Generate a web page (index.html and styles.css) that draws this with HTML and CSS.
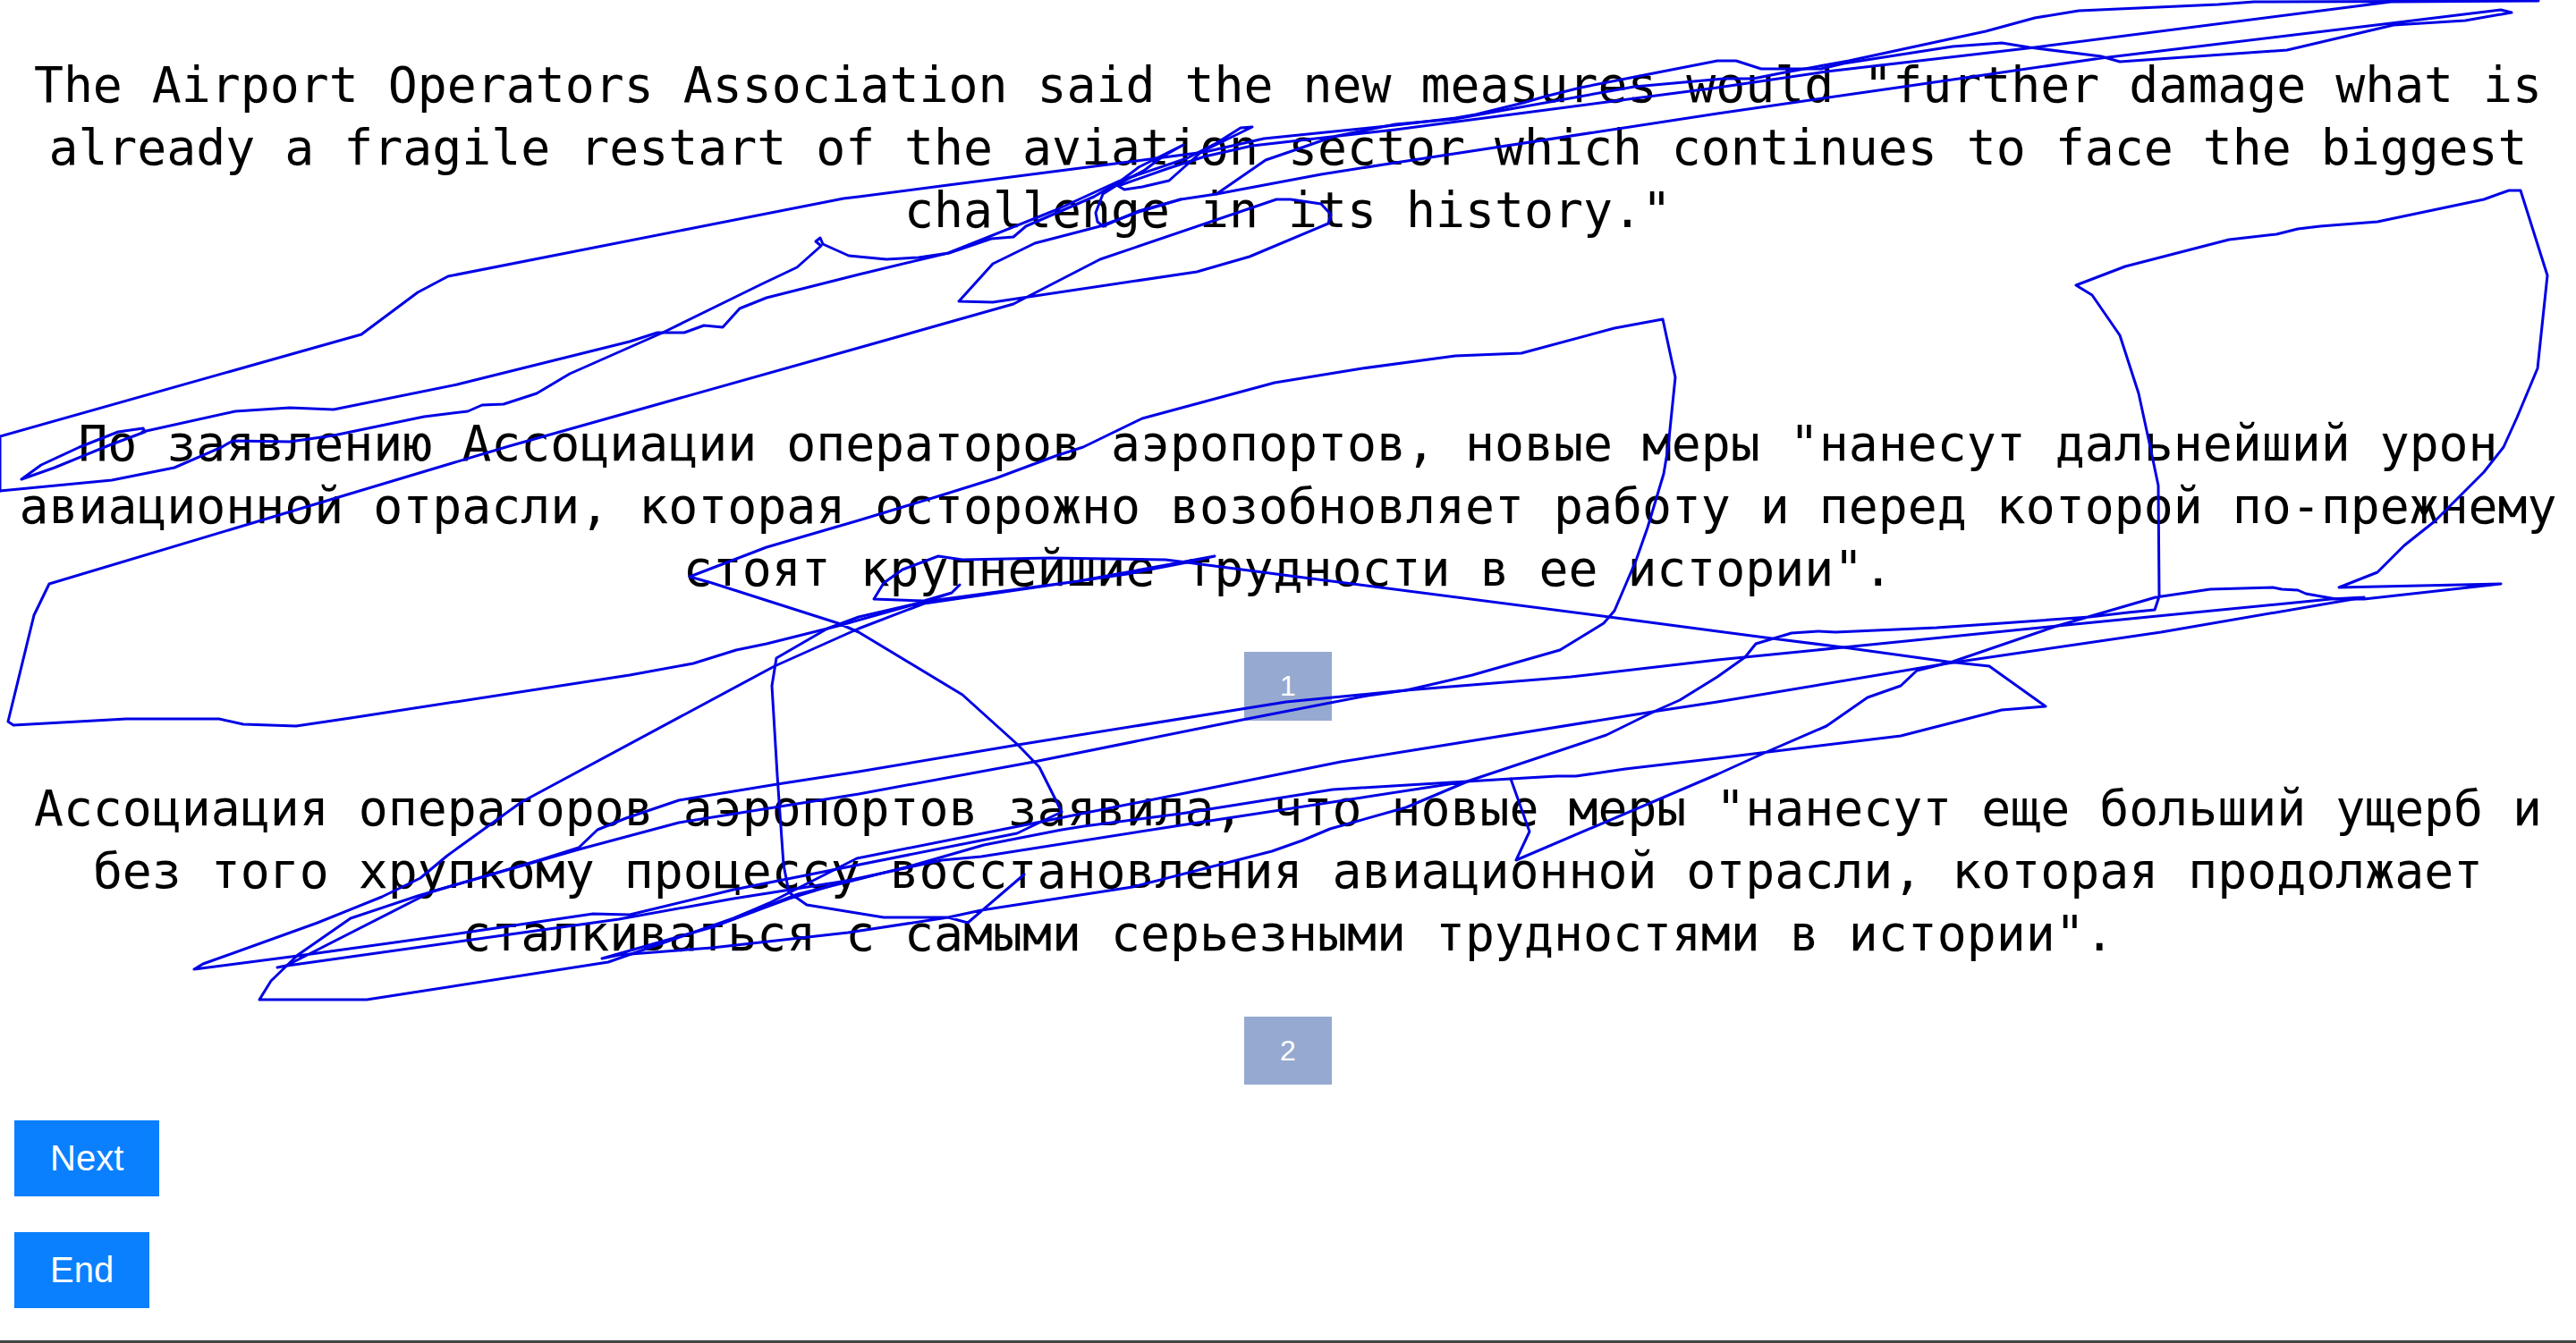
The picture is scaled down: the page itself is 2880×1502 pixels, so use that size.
FILE: index.html
```html
<!DOCTYPE html>
<html lang="en">
<head>
<meta charset="utf-8">
<title>Translation sketch</title>
<link rel="stylesheet" href="styles.css">
</head>
<body>
<main class="page">
  <p class="passage passage-first">The Airport Operators Association said the new measures would "further damage what is already a fragile restart of the aviation sector which continues to face the biggest challenge in its history."</p>
  <p class="passage">По заявлению Ассоциации операторов аэропортов, новые меры "нанесут дальнейший урон авиационной отрасли, которая осторожно возобновляет работу и перед которой по-прежнему стоят крупнейшие трудности в ее истории".</p>
  <div class="tag">1</div>
  <p class="passage">Ассоциация операторов аэропортов заявила, что новые меры "нанесут еще больший ущерб и без того хрупкому процессу восстановления авиационной отрасли, которая продолжает сталкиваться с самыми серьезными трудностями в истории".</p>
  <div class="tag">2</div>
  <div class="actions">
    <button class="btn" type="button">Next</button>
    <button class="btn" type="button">End</button>
  </div>
  <div class="bottom-rule"></div>
</main>
<svg class="scribble" width="2880" height="1502" viewBox="0 0 2880 1502" aria-hidden="true">
  <polyline points="0,549 0,488 404,374 467,327 501,309 943,222 960,220 1060,207 1270,180 1347,170 1413,155 1560,140 1627,132 1650,128 1703,115 1727,108 1767,98 1833,85 1920,68 1941,68 1969,77 2036,77 2061,71 2183,52 2238,48 2269,53 2349,63 2370,69 2557,56 2676,28 2756,23 2808,14 2796,11 2673,26 2349,65 2128,97 1920,127 1560,182 1477,195 1360,217 1320,223 1273,237 1230,253 1157,272 1110,295 1072,337 1110,338 1338,304 1397,287 1485,250 1488,240 1477,228 1443,223 1427,223 1230,290 1133,340 960,389 569,499 55,653 38,688 9,807 15,811 141,804 245,804 272,810 331,812 392,803 704,755 775,742 823,727 857,720 937,700 1033,673 1205,650 1260,642 1327,629 1358,622 1205,650 1033,675 960,703 866,745 583,897 500,957 470,982 427,1003 355,1032 227,1078 217,1084 333,1069 520,1043 663,1022 704,1023 820,995 1137,932 1187,908 1173,880 1162,858 1138,833 1076,777 960,707 937,697 796,652 771,645 857,612 960,582 1049,555 1113,535 1180,510 1211,500 1277,468 1425,428 1523,412 1627,398 1701,395 1805,367 1859,357 1873,422 1865,500 1860,530 1842,590 1829,627 1805,683 1793,697 1744,727 1646,755 1572,772 1529,778 1389,805 1156,852 960,888 759,920 647,950 483,997 320,1080 310,1082 321,1080 520,1052 692,1028 820,1005 947,985"/>
  <polyline points="0,549 125,537 195,523 248,500 260,493 324,494 373,487 474,466 523,460 539,453 563,452 600,440 637,418 741,372 851,318 891,299 918,275 912,270 917,266 920,273 949,286 991,290 1027,288 1061,283 1108,267 1133,265 1147,253 1223,220 1252,203 1273,187 1323,162 1300,175 1280,190 1252,205 1233,217 1225,238 1227,248 1233,253 1273,236 1320,223"/>
  <polyline points="24,536 46,520 89,500 132,483 160,479 162,483 122,498 61,523 24,536"/>
  <polyline points="159,483 263,460 324,456 373,458 511,430 704,382 735,372 765,372 787,364 808,366 827,345 857,333 960,307 1060,283 1180,235 1250,203 1327,177 1360,160 1387,143 1400,142 1343,170 1307,202 1277,209 1257,212 1250,208 1307,188 1347,175 1400,163 1560,145 1920,98 2042,80 2275,53 2673,2 2838,1 2520,2 2480,5 2324,12 2275,20 2220,35 2067,68 1990,82 1960,88 1927,88 1827,97 1627,133 1560,139 1490,153 1450,167 1415,179 1360,217"/>
  <polyline points="1145,978 1082,1032 1060,1026 988,1026 902,1012 882,998 876,967 869,867 863,767 868,736 925,703 960,690 1033,673 1064,663 1073,654 1064,663 1033,672 977,670 988,652 1009,637 1049,622 1076,626 1174,624 1303,626 1327,629 1450,645 1799,690 1920,706 1981,714 2061,724 2177,740 2224,745 2287,790 2238,794 2125,823 1920,848 1817,860 1762,868 1741,868 1689,871 1710,930 1695,962 1920,866 1975,841 2042,812 2088,780 2125,767 2143,750 2183,740 2300,700 2410,668 2471,659 2541,657 2551,659 2569,660 2578,664 2612,670 2643,670 2796,653 2615,657 2658,640 2688,610 2722,583 2777,528 2799,500 2814,467 2837,412 2848,308 2818,213 2805,213 2777,223 2658,248 2594,253 2569,256 2545,262 2492,268 2376,298 2321,319 2339,330 2370,375 2391,440 2404,500 2413,543 2414,667 2409,682 2379,685 2336,690 2238,697 2165,702 2052,707 2033,706 2003,708 1963,720 1951,735 1920,757 1878,783 1851,795 1796,822 1643,873 1572,903 1487,927 1456,940 1422,952 1266,992 1097,1018 1060,1026 948,1043 796,1060 692,1068 673,1072 796,1037 882,1005 947,985 1053,962 1097,958 1320,923 1633,875"/>
  <polyline points="1689,871 1490,883 1320,910 1212,924 1187,928 1100,945 1020,968 953,985 892,1000 796,1037"/>
  <polyline points="2643,668 2416,707 2177,742 1920,785 1854,795 1499,852 1320,888 1144,923 958,960 883,998 860,1010 820,1027 680,1076 410,1118 290,1118 303,1097 333,1068 392,1027 467,1002 603,962 647,948 668,928 700,915 759,895 869,877 960,863 1138,833 1438,785 1572,772 1756,757 1920,738 2061,724 2300,700 2606,670 2643,668"/>
</svg>
</body>
</html>
```

FILE: styles.css
```css
* { box-sizing: border-box; }

html, body { margin: 0; padding: 0; background: #fff; }

.page {
  display: flex;
  flex-direction: column;
  align-items: center;
  min-height: 1502px;
  padding: 60px 8px 0;
}

.passage {
  margin: 0 0 58px;
  width: 100%;
  font-family: "DejaVu Sans Mono", monospace;
  font-size: 54.8px;
  line-height: 70px;
  text-align: center;
  color: #000;
}

.passage-first { margin-bottom: 191px; }

.tag {
  margin-bottom: 63px;
  padding: 20px 40px;
  background: #96a9d0;
  color: #fff;
  font-family: "Liberation Sans", Arial, sans-serif;
  font-size: 32px;
  line-height: 36.5px;
}

.actions {
  align-self: stretch;
  display: flex;
  flex-direction: column;
  align-items: flex-start;
  gap: 40px;
  margin-top: -23px;
  padding-left: 8px;
}

.btn {
  display: block;
  padding: 20px 40px;
  border: 0;
  background: #0a80ff;
  color: #fff;
  font-family: "Liberation Sans", Arial, sans-serif;
  font-size: 40px;
  line-height: 45px;
}

.bottom-rule {
  position: absolute;
  left: 0;
  right: 0;
  bottom: 0;
  height: 3px;
  background: #444;
}

.scribble {
  position: absolute;
  top: 0;
  left: 0;
  fill: none;
  stroke: #0000e6;
  stroke-width: 3;
  stroke-linejoin: round;
  stroke-linecap: round;
  pointer-events: none;
}
```
